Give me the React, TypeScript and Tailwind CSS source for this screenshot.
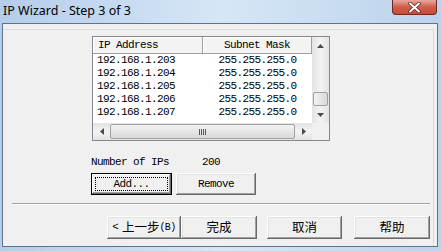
import React from "react";

const mono = { fontFamily: '"Liberation Mono", "DejaVu Sans Mono", monospace' };
const cjk = { fontFamily: '"Noto Sans CJK SC", "Liberation Sans", sans-serif' };

const rows = ["192.168.1.203", "192.168.1.204", "192.168.1.205", "192.168.1.206", "192.168.1.207"];

function Btn({ children, w, def }: { children: React.ReactNode; w: string; def?: boolean }) {
  return (
    <div
      className={`${w} h-full flex items-center justify-center bg-[#f0f0f0] ${
        def
          ? "border border-black shadow-[inset_-1px_-1px_#696969,inset_1px_1px_#ffffff,inset_-2px_-2px_#a0a0a0]"
          : "shadow-[inset_-1px_-1px_#696969,inset_1px_1px_#ffffff,inset_-2px_-2px_#a0a0a0,inset_2px_2px_#e3e3e3]"
      } relative`}
    >
      {def && <div className="absolute inset-[3px] border border-dotted border-black" />}
      {children}
    </div>
  );
}

export default function App() {
  return (
    <div className="w-[441px] h-[251px] overflow-hidden bg-gradient-to-r from-[#b4cdea] via-[#d6e6f6] to-[#bcd3ec] text-black">
      {/* title bar */}
      <div className="h-[23px] flex items-start justify-between">
        <div className="pl-[3px] pt-[3px] text-[12.5px] leading-[16px] text-black" style={{ fontFamily: '"Noto Sans", "Open Sans", sans-serif' }}>
          IP Wizard - Step 3 of 3
        </div>
        <div className="mr-[4px] w-[45px] h-[15px] rounded-b-[4px] border border-t-0 border-[#6e2a22] bg-gradient-to-b from-[#e6a89c] via-[#d15d4b] to-[#c8493a] flex items-center justify-center">
          <svg width="13" height="11" viewBox="0 0 13 11">
            <path d="M2 1.5 L11 9.5 M11 1.5 L2 9.5" stroke="#5a2018" strokeWidth="3.4" strokeLinecap="round" />
            <path d="M2 1.5 L11 9.5 M11 1.5 L2 9.5" stroke="#ffffff" strokeWidth="2" strokeLinecap="round" />
          </svg>
        </div>
      </div>

      {/* client */}
      <div className="ml-[2px] w-[436px] h-[224px] border border-[#60728c] bg-[#f0f0f0] flex flex-col">
        <div className="mt-[5px] mr-[3px] flex-1 border-t border-r border-[#dcdcdc] flex flex-col text-[11px] tracking-[-0.6px]" style={mono}>
          {/* list view */}
          <div className="ml-[89px] mt-[6px] w-[238px] h-[105px] border border-[#828790] bg-white grid grid-cols-[219px_17px] grid-rows-[86px_17px]">
            <div className="flex flex-col">
              <div className="h-[17px] flex bg-[#f3f3f3] border-b border-[#a0a0a0] leading-[16px]">
                <div className="w-[110px] pl-[5px] border-r border-[#a0a0a0] shadow-[inset_1px_1px_#ffffff]">IP Address</div>
                <div className="w-[109px] text-center border-r border-[#a0a0a0] shadow-[inset_1px_1px_#ffffff]">Subnet Mask</div>
              </div>
              {rows.map((r) => (
                <div key={r} className="h-[13px] flex leading-[13px]">
                  <div className="w-[110px] pl-[4px]">{r}</div>
                  <div className="w-[109px] text-center">255.255.255.0</div>
                </div>
              ))}
            </div>
            {/* vertical scrollbar */}
            <div className="bg-gradient-to-r from-[#e3e3e3] via-[#f3f3f3] to-[#e3e3e3] flex flex-col items-center">
              <div className="h-[17px] flex items-center justify-center">
                <svg width="7" height="4" viewBox="0 0 7 4"><path d="M0 4 L3.5 0 L7 4 Z" fill="#4a4a4a" /></svg>
              </div>
              <div className="flex-1 w-full flex flex-col justify-end">
                <div className="mx-[1px] h-[14px] rounded-[2px] border border-[#a0a0a0] bg-gradient-to-r from-[#f2f2f2] to-[#d8d8d8]" />
              </div>
              <div className="h-[17px] flex items-center justify-center">
                <svg width="7" height="4" viewBox="0 0 7 4"><path d="M0 0 L3.5 4 L7 0 Z" fill="#4a4a4a" /></svg>
              </div>
            </div>
            {/* horizontal scrollbar */}
            <div className="bg-gradient-to-b from-[#e3e3e3] via-[#f3f3f3] to-[#e3e3e3] flex items-center">
              <div className="w-[17px] h-full flex items-center justify-center">
                <svg width="4" height="7" viewBox="0 0 4 7"><path d="M4 0 L0 3.5 L4 7 Z" fill="#4a4a4a" /></svg>
              </div>
              <div className="flex-1 h-full py-[1px]">
                <div className="h-full rounded-[2px] border border-[#a0a0a0] bg-gradient-to-b from-[#f4f4f4] to-[#d8d8d8] flex items-center justify-center">
                  <div className="flex gap-[1px]">
                    <div className="w-[1px] h-[6px] bg-[#5a5a5a]" />
                    <div className="w-[1px] h-[6px] bg-[#5a5a5a]" />
                    <div className="w-[1px] h-[6px] bg-[#5a5a5a]" />
                    <div className="w-[1px] h-[6px] bg-[#5a5a5a]" />
                  </div>
                </div>
              </div>
              <div className="w-[17px] h-full flex items-center justify-center">
                <svg width="4" height="7" viewBox="0 0 4 7"><path d="M0 0 L4 3.5 L0 7 Z" fill="#4a4a4a" /></svg>
              </div>
            </div>
            <div className="bg-[#f0f0f0]" />
          </div>

          {/* number of IPs */}
          <div className="ml-[88px] mt-[15px] h-[12px] leading-[12px] flex">
            <div className="w-[111px]">Number of IPs</div>
            <div>200</div>
          </div>

          {/* add/remove */}
          <div className="ml-[88px] mt-[5px] h-[22px] flex gap-[4px]">
            <Btn w="w-[81px]" def>Add...</Btn>
            <Btn w="w-[80px]">Remove</Btn>
          </div>

          {/* separator */}
          <div className="ml-[9px] mt-[8px] w-[418px] h-[2px] border-t border-[#a0a0a0] border-b border-b-white" />

          {/* wizard buttons */}
          <div className="ml-[104px] mt-[11px] h-[23px] flex text-[12.5px] tracking-normal" style={cjk}>
            <Btn w="w-[74px]">
              <span className="text-[11px]" style={mono}>&lt;</span>
              <span className="ml-[3px]">上一步</span>
              <span className="text-[10px] tracking-[-0.6px]" style={mono}>(B)</span>
            </Btn>
            <Btn w="w-[76px]">完成</Btn>
            <div className="w-[10px]" />
            <Btn w="w-[75px]">取消</Btn>
            <div className="w-[12px]" />
            <Btn w="w-[76px]">帮助</Btn>
          </div>
        </div>
      </div>
    </div>
  );
}
